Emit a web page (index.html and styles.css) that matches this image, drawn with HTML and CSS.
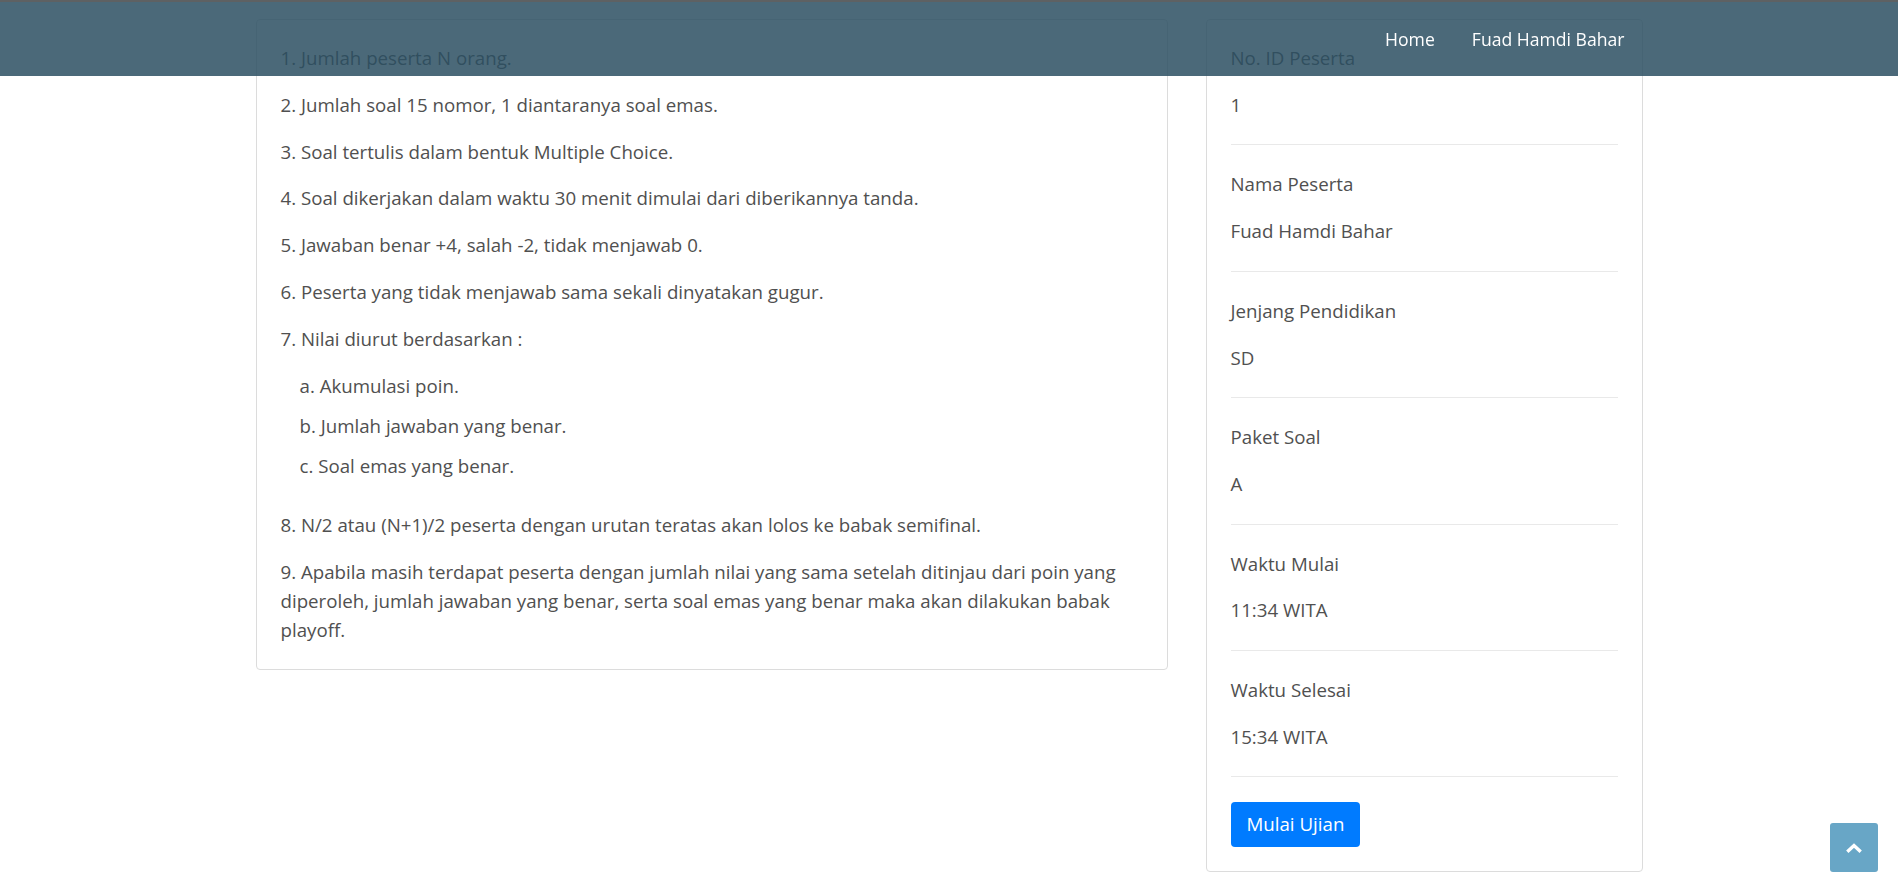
FILE: index.html
```html
<!DOCTYPE html>
<html lang="id">
<head>
<meta charset="utf-8">
<title>Ujian</title>
<link rel="stylesheet" href="styles.css">
</head>
<body>
<nav class="navbar">
  <div class="nav-inner">
    <a class="nav-link" href="#">Home</a>
    <a class="nav-link" href="#">Fuad Hamdi Bahar</a>
  </div>
</nav>

<main class="layout">
  <section class="card rules">
    <p class="rule">1. Jumlah peserta N orang.</p>
    <p class="rule">2. Jumlah soal 15 nomor, 1 diantaranya soal emas.</p>
    <p class="rule">3. Soal tertulis dalam bentuk Multiple Choice.</p>
    <p class="rule">4. Soal dikerjakan dalam waktu 30 menit dimulai dari diberikannya tanda.</p>
    <p class="rule">5. Jawaban benar +4, salah -2, tidak menjawab 0.</p>
    <p class="rule">6. Peserta yang tidak menjawab sama sekali dinyatakan gugur.</p>
    <p class="rule">7. Nilai diurut berdasarkan :</p>
    <div class="sub">
      <p class="sub-item">a. Akumulasi poin.</p>
      <p class="sub-item">b. Jumlah jawaban yang benar.</p>
      <p class="sub-item">c. Soal emas yang benar.</p>
    </div>
    <p class="rule">8. N/2 atau (N+1)/2 peserta dengan urutan teratas akan lolos ke babak semifinal.</p>
    <p class="rule last">9. Apabila masih terdapat peserta dengan jumlah nilai yang sama setelah ditinjau dari poin yang diperoleh, jumlah jawaban yang benar, serta soal emas yang benar maka akan dilakukan babak playoff.</p>
  </section>

  <aside class="card info">
    <div class="field">
      <p class="label">No. ID Peserta</p>
      <p class="value">1</p>
    </div>
    <hr class="divider">
    <div class="field">
      <p class="label">Nama Peserta</p>
      <p class="value">Fuad Hamdi Bahar</p>
    </div>
    <hr class="divider">
    <div class="field">
      <p class="label">Jenjang Pendidikan</p>
      <p class="value">SD</p>
    </div>
    <hr class="divider">
    <div class="field">
      <p class="label">Paket Soal</p>
      <p class="value">A</p>
    </div>
    <hr class="divider">
    <div class="field">
      <p class="label">Waktu Mulai</p>
      <p class="value">11:34 WITA</p>
    </div>
    <hr class="divider">
    <div class="field">
      <p class="label">Waktu Selesai</p>
      <p class="value">15:34 WITA</p>
    </div>
    <hr class="divider">
    <button class="btn-start" type="button">Mulai Ujian</button>
  </aside>
</main>

<a class="back-top" href="#" aria-label="Kembali ke atas">
  <svg width="18" height="12" viewBox="0 0 18 12" aria-hidden="true">
    <path d="M2.3 9.8 L9 3.6 L15.7 9.8" fill="none" stroke="#ffffff" stroke-width="3.4" stroke-linecap="butt" stroke-linejoin="miter"/>
  </svg>
</a>
</body>
</html>
```

FILE: styles.css
```css
* {
  box-sizing: border-box;
}

html, body {
  margin: 0;
  padding: 0;
  background: #ffffff;
}

body {
  font-family: "Open Sans", "Noto Sans", "Liberation Sans", sans-serif;
  font-size: 18.7px;
  line-height: 28.8px;
  color: #505050;
}

.navbar {
  position: fixed;
  top: 0;
  left: 0;
  right: 0;
  height: 76px;
  background: rgba(43, 79, 97, 0.85);
  border-top: 2px solid #5e6163;
  z-index: 10;
}

.nav-inner {
  width: 1387px;
  margin: 0 auto;
  height: 100%;
  display: flex;
  justify-content: flex-end;
  align-items: flex-start;
  padding-top: 25px;
  padding-right: 18px;
}

.nav-link {
  color: #ffffff;
  text-decoration: none;
  font-size: 17.6px;
  font-weight: 500;
  line-height: 24px;
  padding: 0 0 0 37px;
}

.layout {
  display: grid;
  grid-template-columns: 912px 437px;
  column-gap: 38px;
  justify-content: center;
  align-items: start;
  padding-top: 19px;
  padding-bottom: 17px;
}

.card {
  border: 1px solid #dcdcdc;
  border-radius: 4px;
  background: #ffffff;
  padding: 24px;
}

.rule {
  margin: 0 0 18px;
}

.rule.last {
  margin-bottom: 0;
}

.sub {
  padding-left: 19px;
  margin-bottom: 30.5px;
}

.sub-item {
  margin: 0 0 11.5px;
}

.field .label {
  margin: 0 0 18px;
}

.field .value {
  margin: 0;
}

.divider {
  border: 0;
  border-top: 1px solid #e9e9e9;
  margin: 24.9px 0;
  height: 0;
}

.btn-start {
  display: inline-block;
  font-family: inherit;
  font-size: 18.7px;
  line-height: 28.8px;
  color: #ffffff;
  background: #007bff;
  border: 0;
  border-radius: 4px;
  padding: 8px 16px;
  margin-top: 0;
  cursor: pointer;
}

.back-top {
  position: fixed;
  right: 20px;
  bottom: 15px;
  width: 48px;
  height: 49px;
  background: #68a6c6;
  border-radius: 3px;
  display: flex;
  align-items: center;
  justify-content: center;
}
```
